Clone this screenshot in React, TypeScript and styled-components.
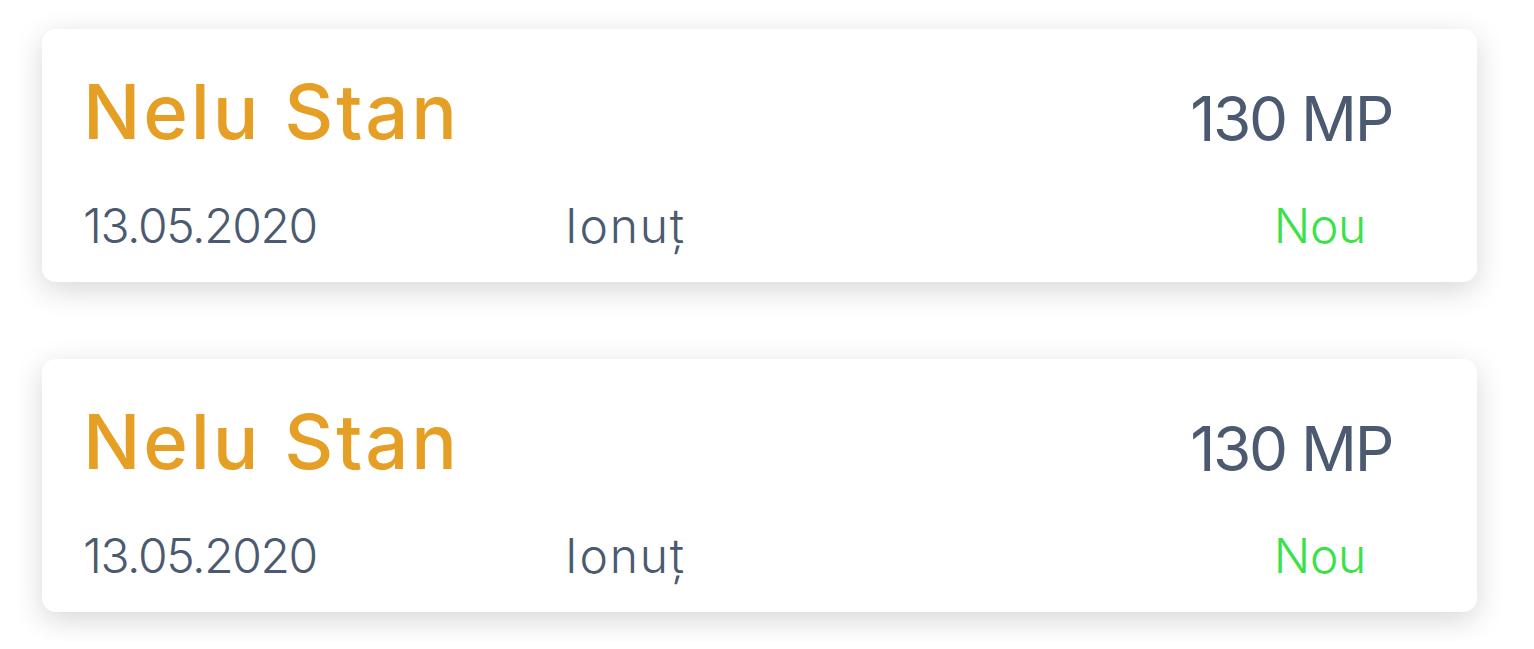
import React from "react";
import styled, { createGlobalStyle } from "styled-components";

const GlobalStyle = createGlobalStyle`
  html, body {
    margin: 0;
    padding: 0;
    background: #ffffff;
  }
  body {
    font-family: "Inter", "Noto Sans", sans-serif;
  }
`;

const Page = styled.main`
  display: flex;
  flex-direction: column;
  gap: 77px;
  padding: 29px 57px 29px 42px;
`;

const Card = styled.article`
  box-sizing: border-box;
  height: 253px;
  background: #ffffff;
  border-radius: 14px;
  box-shadow: 0 8px 30px rgba(0, 0, 0, 0.16);
  padding: 44px 85px 0 41px;
  display: flex;
  flex-direction: column;
  gap: 52px;
`;

const TopRow = styled.div`
  display: flex;
  justify-content: space-between;
  align-items: flex-start;
`;

const Name = styled.h2`
  margin: 0;
  font-size: 76px;
  line-height: 1;
  font-weight: 500;
  letter-spacing: 2.8px;
  color: #e49f24;
`;

const Area = styled.div`
  margin-top: 15px;
  font-size: 62px;
  line-height: 1;
  font-weight: 400;
  letter-spacing: -2.3px;
  color: #4b5a70;
`;

const BottomRow = styled.div`
  display: grid;
  grid-template-columns: 482px 1fr auto;
  align-items: flex-start;
`;

const Info = styled.span<{ $tone?: "status" | "agent" }>`
  font-size: 48px;
  line-height: 1;
  font-weight: 300;
  letter-spacing: ${(p) =>
    p.$tone === "agent" ? "1.8px" : p.$tone === "status" ? "-0.3px" : "-1.4px"};
  color: ${(p) => (p.$tone === "status" ? "#3ae248" : "#4b5a70")};
  padding-right: ${(p) => (p.$tone === "status" ? "26px" : "0")};
`;

type Entry = {
  name: string;
  area: string;
  date: string;
  agent: string;
  status: string;
};

const entries: Entry[] = [
  { name: "Nelu Stan", area: "130 MP", date: "13.05.2020", agent: "Ionuț", status: "Nou" },
  { name: "Nelu Stan", area: "130 MP", date: "13.05.2020", agent: "Ionuț", status: "Nou" },
];

export default function App() {
  return (
    <>
      <GlobalStyle />
      <Page>
        {entries.map((e, i) => (
          <Card key={i}>
            <TopRow>
              <Name>{e.name}</Name>
              <Area>{e.area}</Area>
            </TopRow>
            <BottomRow>
              <Info>{e.date}</Info>
              <Info $tone="agent">{e.agent}</Info>
              <Info $tone="status">{e.status}</Info>
            </BottomRow>
          </Card>
        ))}
      </Page>
    </>
  );
}
